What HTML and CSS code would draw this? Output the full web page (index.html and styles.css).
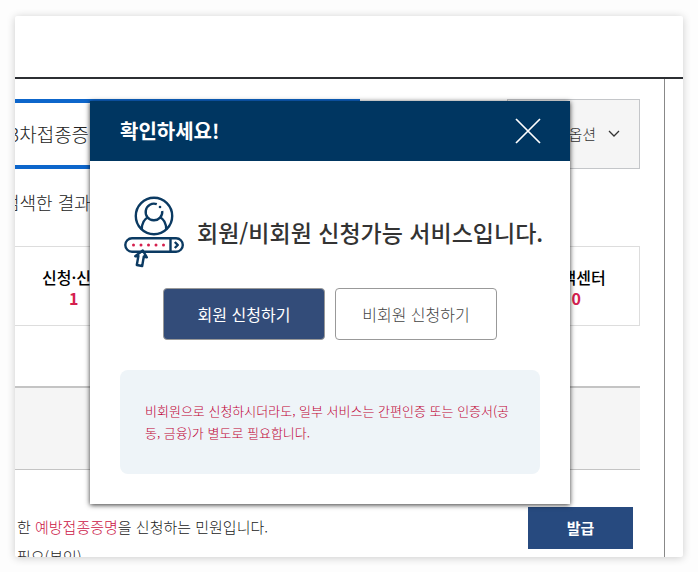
FILE: index.html
```html
<!DOCTYPE html>
<html lang="ko">
<head>
<meta charset="utf-8">
<meta name="viewport" content="width=device-width, initial-scale=1">
<title>확인하세요!</title>
<link rel="stylesheet" href="styles.css">
</head>
<body>
<div class="card">
  <header class="topbar"></header>
  <main class="content">
    <div class="search">
      <div class="keyword">3차접종증</div>
      <button class="option" type="button">옵션
        <svg class="chevron" viewBox="0 0 12 8" aria-hidden="true"><path d="M1 1l5 5 5-5"/></svg>
      </button>
    </div>
    <p class="summary">검색한 결과</p>
    <ul class="stats">
      <li><strong>신청·신고</strong><span class="count">1</span></li>
      <li></li>
      <li></li>
      <li></li>
      <li><strong>고객센터</strong><span class="count">0</span></li>
    </ul>
    <div class="band"></div>
    <section class="result">
      <div class="description">
        <p>한 <em>예방접종증명</em>을 신청하는 민원입니다.</p>
        <p>필요(본인)</p>
      </div>
      <button class="issue" type="button">발급</button>
    </section>
  </main>

  <div class="modal" role="dialog" aria-labelledby="modal-title">
    <div class="modal-head">
      <h2 id="modal-title">확인하세요!</h2>
      <button class="close" type="button" aria-label="닫기">
        <svg viewBox="0 0 24 24" aria-hidden="true"><path d="M0 0l24 24M24 0L0 24"/></svg>
      </button>
    </div>
    <div class="modal-body">
      <div class="message">
        <svg class="member-icon" viewBox="0 0 62 74" aria-hidden="true">
          <g class="outline">
            <circle cx="31" cy="21" r="18.200"/>
            <path d="M33.800 9.200A8.300 8.300 0 1 0 39.200 16"/>
            <path d="M18.800 34.500c0-7 2.200-10.300 6.200-12.300M43.200 34.500c0-7-2.200-10.300-6.200-12.300"/>
            <rect x="2.300" y="43.300" width="57.500" height="13.400" rx="6.700"/>
            <path d="M47.500 43.500v13M51.800 47l3 3-3 3"/>
            <path class="pointer" d="M19.800 55.500l4 6.800-3-.8-1.600 9.500-5.400-1 1.600-9-3.200.2z"/>
          </g>
          <circle class="spark" cx="37" cy="12" r="1.300"/>
          <g class="dots">
            <circle cx="10.500" cy="50" r="1.500"/><circle cx="18" cy="50" r="1.500"/><circle cx="25.500" cy="50" r="1.500"/><circle cx="33" cy="50" r="1.500"/><circle cx="40.500" cy="50" r="1.500"/>
          </g>
        </svg>
        <p>회원/비회원 신청가능 서비스입니다.</p>
      </div>
      <div class="actions">
        <button class="action primary" type="button">회원 신청하기</button>
        <button class="action" type="button">비회원 신청하기</button>
      </div>
      <p class="notice">비회원으로 신청하시더라도, 일부 서비스는 간편인증 또는 인증서(공동, 금융)가 별도로 필요합니다.</p>
    </div>
  </div>
</div>
</body>
</html>
```
FILE: styles.css
```css
* {
  box-sizing: border-box;
}

body {
  display: flex;
  height: 100vh;
  margin: 0;
  padding: 16px 15px 15px;
  background: #fdfdfd;
  color: #222;
  font: 300 15px/24px "Noto Sans CJK KR", sans-serif;
}

p,
h2,
ul {
  margin: 0;
  padding: 0;
}

button {
  padding: 0;
  font: inherit;
  cursor: pointer;
}

.card {
  position: relative;
  flex: 1;
  overflow: hidden;
  border-radius: 2px;
  background: #fff;
  box-shadow: 0 1px 8px rgba(0, 0, 0, 0.2);
}

.topbar {
  height: 63px;
  border-bottom: 2px solid #2c2f33;
}

.content {
  height: 100%;
  margin-right: 18px;
  padding: 20px 24px 0 0;
  border-right: 1px solid #888;
}

.search {
  display: flex;
  justify-content: space-between;
  height: 70px;
}

.keyword {
  flex: 0 0 345px;
  border: solid #0d66cb;
  border-width: 4px 0;
  font-size: 19px;
  line-height: 62px;
  text-indent: -6px;
}

.option {
  display: flex;
  align-items: center;
  justify-content: flex-end;
  gap: 12px;
  width: 133px;
  padding-right: 19px;
  border: 1px solid #c4c6c9;
  background: #f5f5f5;
  color: #333;
}

.chevron {
  width: 12px;
  height: 8px;
  fill: none;
  stroke: #333;
  stroke-width: 1.3;
}

.summary {
  margin: 20px 0 30px;
  font-size: 18px;
  line-height: 27px;
  text-indent: -12px;
}

.stats {
  display: flex;
  height: 80px;
  margin-left: -5px;
  border: 1px solid #ddd;
  color: #000;
  font-size: 16px;
  line-height: 21px;
  list-style: none;
}

.stats li {
  display: flex;
  flex: 1;
  flex-direction: column;
  justify-content: center;
  padding-top: 3px;
  text-align: center;
}

.stats strong {
  font-weight: 500;
}

.count {
  color: #d5204e;
  font-weight: 700;
}

.band {
  height: 84px;
  margin-top: 60px;
  border: solid #c4c4c4;
  border-width: 2px 0 1px;
  background: #f5f5f5;
}

.result {
  display: flex;
  justify-content: space-between;
  padding: 37px 7px 0 0;
}

.description {
  padding-top: 5px;
  line-height: 30px;
}

.description p {
  padding-left: 2px;
}

.description em {
  color: #cb1244;
  font-style: normal;
}

.issue {
  width: 105px;
  height: 42px;
  border: 0;
  background: #274a7f;
  color: #fff;
  font-weight: 700;
}

.modal {
  position: absolute;
  top: 85px;
  left: 75px;
  width: 480px;
  background: #fff;
  box-shadow: 0 1px 5px rgba(0, 0, 0, 0.8);
}

.modal-head {
  display: flex;
  align-items: center;
  justify-content: space-between;
  height: 60px;
  padding: 0 30px;
  background: #003661;
  color: #fff;
}

.modal-head h2 {
  font-size: 20px;
  font-weight: 700;
}

.close {
  width: 24px;
  height: 24px;
  border: 0;
  background: none;
}

.close svg {
  display: block;
  overflow: visible;
  fill: none;
  stroke: #fff;
  stroke-width: 1.7;
}

.modal-body {
  padding: 34px 30px 30px;
}

.message {
  display: flex;
  align-items: center;
  gap: 12px;
  padding-left: 3px;
}

.message p {
  color: #333;
  font-size: 23px;
  font-weight: 500;
  line-height: 34px;
  white-space: nowrap;
}

.member-icon {
  flex: none;
  width: 62px;
  height: 74px;
}

.outline {
  fill: none;
  stroke: #0b3a62;
  stroke-width: 2.4;
  stroke-linejoin: round;
}

.pointer {
  fill: #fff;
}

.spark {
  fill: #0b3a62;
}

.dots {
  fill: #d5204e;
}

.actions {
  display: flex;
  justify-content: center;
  gap: 10px;
  margin-top: 19px;
}

.action {
  width: 162px;
  height: 52px;
  border: 1px solid #999;
  border-radius: 4px;
  background: #fff;
  color: #444;
  font-size: 16px;
}

.primary {
  background: #334c79;
  color: #fff;
  font-weight: 400;
}

.notice {
  margin-top: 30px;
  padding: 30px 28px 30px 25px;
  border-radius: 8px;
  background: #eef4f8;
  color: #c00034;
  font-size: 13px;
  line-height: 22px;
}
```
